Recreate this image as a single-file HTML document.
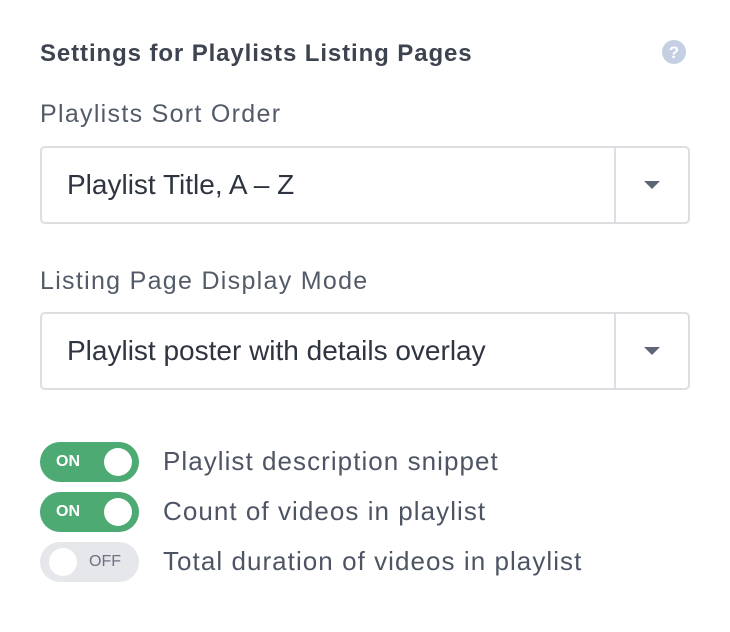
<!DOCTYPE html>
<html><head><meta charset="utf-8"><style>
*{margin:0;padding:0;box-sizing:border-box}
body{width:730px;height:632px;background:#fff;font-family:"Liberation Sans",sans-serif;color:#454d5d;position:relative;overflow:hidden}
.abs{position:absolute;white-space:nowrap}
h1{position:absolute;left:40px;top:40px;font-size:24px;font-weight:bold;color:#3d4450;letter-spacing:0.9px;white-space:nowrap}
.lbl{font-size:25px;color:#535b69;letter-spacing:1.3px}
.sel{position:absolute;left:40px;width:650px;height:78px;border:2px solid #dcdee2;border-radius:5px}
.sel .t{position:absolute;left:25px;top:0;line-height:74px;font-size:28px;color:#2f3540;white-space:nowrap}
.sel .d{position:absolute;left:572px;top:0;width:2px;height:74px;background:#dcdee2}
.sel .a{position:absolute;left:602px;top:33px;width:0;height:0;border-left:8px solid transparent;border-right:8px solid transparent;border-top:8px solid #5e6675}
.tg{position:absolute;left:40px;width:99px;height:40px;border-radius:20px}
.tg.on{background:#4caa72}
.tg.off{background:#e6e7eb}
.tg .k{position:absolute;top:6px;width:28px;height:28px;border-radius:50%;background:#fff}
.tg span{position:absolute;top:0;line-height:40px;font-size:16px;font-weight:bold}
.tt{position:absolute;left:163px;font-size:26px;color:#4d5564;line-height:40px;letter-spacing:1.05px;white-space:nowrap}
</style></head><body>
<h1>Settings for Playlists Listing Pages</h1>
<svg class="abs" style="left:662px;top:40px" width="24" height="24" viewBox="0 0 24 24"><circle cx="12" cy="12" r="12" fill="#c4cfe3"/><text x="12" y="18" text-anchor="middle" font-family="Liberation Sans" font-weight="bold" font-size="17" fill="#fff">?</text></svg>
<div class="abs lbl" style="left:40px;top:100px">Playlists Sort Order</div>
<div class="sel" style="top:146px"><div class="t">Playlist Title, A – Z</div><div class="d"></div><div class="a"></div></div>
<div class="abs lbl" style="left:40px;top:267px">Listing Page Display Mode</div>
<div class="sel" style="top:312px"><div class="t">Playlist poster with details overlay</div><div class="d"></div><div class="a"></div></div>
<div class="tg on" style="top:442px"><span style="left:16px;color:#fff">ON</span><div class="k" style="left:64px"></div></div>
<div class="tt" style="top:441px">Playlist description snippet</div>
<div class="tg on" style="top:492px"><span style="left:16px;color:#fff">ON</span><div class="k" style="left:64px"></div></div>
<div class="tt" style="top:491px">Count of videos in playlist</div>
<div class="tg off" style="top:542px"><div class="k" style="left:9px"></div><span style="left:49px;color:#6b7280;font-weight:normal">OFF</span></div>
<div class="tt" style="top:541px">Total duration of videos in playlist</div>
</body></html>
